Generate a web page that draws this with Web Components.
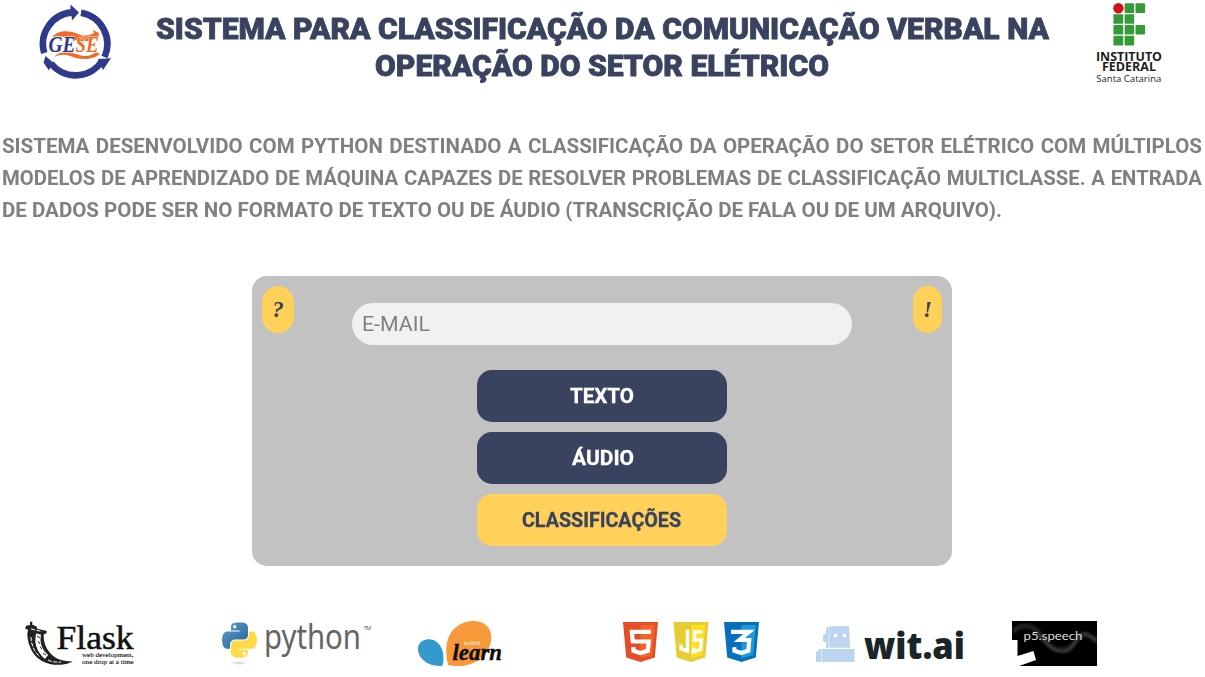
<!DOCTYPE html>
<html lang="pt-BR">
<head>
<meta charset="utf-8">
<title>Classificação da Comunicação Verbal</title>
<style>
body{margin:0;background:#fff;font-family:Roboto,"Liberation Sans",sans-serif;color:#39425f;overflow:hidden}
</style>
</head>
<body>
<app-page></app-page>
<script>
const define=(name,html,ready)=>customElements.define(name,class extends HTMLElement{
  constructor(){super();this.attachShadow({mode:'open'}).innerHTML=html;}
  connectedCallback(){if(ready)ready(this);}
});

// One line of text stretched to a given width; "ratio" fixes the glyph scale and leaves the rest to the word gaps
define('fit-line',`<style>:host{display:block;white-space:nowrap;width:var(--w)}span{display:inline-block;transform-origin:0 50%}</style><span><slot></slot></span>`,el=>{
  const w=+el.getAttribute('width');el.style.setProperty('--w',w+'px');
  const s=el.shadowRoot.querySelector('span');
  const words=el.textContent.trim().split(' ').length-1;
  const ratio=el.getAttribute('ratio');
  if(ratio){s.style.wordSpacing=((w/+ratio-s.getBoundingClientRect().width)/words)+'px';}
  const n=s.getBoundingClientRect().width;
  s.style.transform='scaleX('+(w/n)+')';
});

define('gese-logo',`<style>:host{display:block;width:72px;height:76px}svg{display:block}</style>
<svg width="72" height="76" viewBox="39 4 72 76">
<g fill="none" stroke="#303a8c" stroke-width="6.6"><path d="M44.3 53A31.6 31.6 0 0 1 72 12.4"/><path d="M81 12.8A31.6 31.6 0 0 1 104.500 57"/><path d="M102.500 60.500A31.6 31.6 0 0 1 51 63.500"/></g>
<g fill="#303a8c"><path d="M70.500 4.500 79 12.500 72 20.500l-.5-5-1-6z"/><path d="M98 59l13-.7-8 11.700-2.500-5z"/><path d="M45.500 56l10.500 9-5 .5-2 5-5.500-8z"/></g>
<g fill="#f26a25"><path d="M52 37C60 29 70 31 78 34c8 3 13 1 16-1l-1-3 6 3-1 7-2-2c-6 4-13 4-21 2-9-3-15-5-23-3z"/><path d="M54 57c7-7 15-5 22-3 8 3 14 3 20-2l4 2c-6 5-15 6-24 4-8-3-14-5-22-1z"/></g>
<g font-family="Liberation Serif,serif" font-style="italic" font-weight="bold" font-size="22.500"><text x="48.500" y="51.800" textLength="27" lengthAdjust="spacingAndGlyphs" fill="#303a8c" stroke="#fff" stroke-width="1" paint-order="stroke">GE</text><text x="75.500" y="51.800" textLength="23" lengthAdjust="spacingAndGlyphs" fill="#f26a25" stroke="#fff" stroke-width="1" paint-order="stroke">SE</text></g>
</svg>`);

define('ifsc-logo',`<style>:host{display:block;width:70px;height:86px}svg{display:block}</style>
<svg width="70" height="86" viewBox="1094 1 70 86">
<circle cx="1118.4" cy="8.2" r="5.2" fill="#cd1316"/>
<g fill="#359b38"><rect x="1124.6" y="3.3" width="9.6" height="9.6" rx="1"/><rect x="1135.5" y="3.3" width="9.6" height="9.6" rx="1"/><rect x="1113.4" y="14.2" width="9.8" height="9.6" rx="1"/><rect x="1124.6" y="14.2" width="9.6" height="9.6" rx="1"/><rect x="1113.4" y="25" width="9.8" height="9.6" rx="1"/><rect x="1124.6" y="25" width="9.6" height="9.6" rx="1"/><rect x="1135.5" y="25" width="9.6" height="9.6" rx="1"/><rect x="1113.4" y="35.8" width="9.8" height="9.6" rx="1"/><rect x="1124.6" y="35.8" width="9.6" height="9.6" rx="1"/></g>
<g font-family="Open Sans,sans-serif" fill="#1d1d1b"><g font-weight="bold" font-size="12.300"><text x="1096" y="60.500" textLength="66" lengthAdjust="spacingAndGlyphs">INSTITUTO</text><text x="1102" y="71.300" textLength="54" lengthAdjust="spacingAndGlyphs">FEDERAL</text></g><text x="1096.3" y="82" font-size="9.500" textLength="65" lengthAdjust="spacingAndGlyphs">Santa Catarina</text></g>
</svg>`);

define('page-header',`<style>
:host{display:flex;height:118px;padding:0 41px 0 39px;justify-content:space-between;box-sizing:border-box}
gese-logo{margin-top:4px}ifsc-logo{margin-top:1px}
h1{margin:10px 0 0 -1px;font-size:30px;font-weight:900;line-height:37px;display:flex;flex-direction:column;align-items:center;-webkit-text-stroke:.8px #39425f}
</style><gese-logo></gese-logo>
<h1><fit-line width="893">SISTEMA PARA CLASSIFICAÇÃO DA COMUNICAÇÃO VERBAL NA</fit-line><fit-line width="454">OPERAÇÃO DO SETOR ELÉTRICO</fit-line></h1>
<ifsc-logo></ifsc-logo>`);

define('page-intro',`<style>:host{display:block;height:146px;padding:12px 2px 0;color:#808080;font-weight:700;font-size:20px;line-height:32px}</style>
<fit-line width="1200" ratio="1.025">SISTEMA DESENVOLVIDO COM PYTHON DESTINADO A CLASSIFICAÇÃO DA OPERAÇÃO DO SETOR ELÉTRICO COM MÚLTIPLOS</fit-line>
<fit-line width="1200" ratio="1.015">MODELOS DE APRENDIZADO DE MÁQUINA CAPAZES DE RESOLVER PROBLEMAS DE CLASSIFICAÇÃO MULTICLASSE. A ENTRADA</fit-line>
<fit-line width="1000">DE DADOS PODE SER NO FORMATO DE TEXTO OU DE ÁUDIO (TRANSCRIÇÃO DE FALA OU DE UM ARQUIVO).</fit-line>`);

define('hint-badge',`<style>:host{display:block}button{display:block;width:100%;height:47px;border:0;border-radius:16px;background:#ffd159;color:#39425f;font:italic bold 23px "Liberation Serif",serif;padding:0}</style><button><slot></slot></button>`);

define('action-button',`<style>:host{display:block;width:250px}button{display:flex;align-items:center;justify-content:center;width:100%;height:52px;border:0;border-radius:15px;background:var(--bg,#39425f);color:var(--fg,#fff);font:bold 20px Roboto,sans-serif;padding:0 1px 0 0;-webkit-text-stroke:.3px}</style><button><slot></slot></button>`);

define('email-field',`<style>:host{display:flex;box-sizing:border-box;width:500px;height:42px;border-radius:21px;background:#f1f1f1;padding-left:10px;align-items:center;color:#808080;font-size:20px}</style><fit-line width="68">E-MAIL</fit-line>`);

define('entry-card',`<style>
:host{display:flex;box-sizing:border-box;width:700px;height:290px;margin:0 0 0 252px;padding:10px;background:#c2c2c2;border-radius:15px;justify-content:space-between}
.l{width:32px}.r{width:29px}
form{display:flex;flex-direction:column;align-items:center;gap:10px;padding-top:17px;margin-left:-3px}
email-field{margin-bottom:15px}
.y{--bg:#ffd159;--fg:#39425f}
</style><hint-badge class="l">?</hint-badge>
<form><email-field></email-field><action-button><fit-line width="64">TEXTO</fit-line></action-button><action-button><fit-line width="62">ÁUDIO</fit-line></action-button><action-button class="y"><fit-line width="159">CLASSIFICAÇÕES</fit-line></action-button></form>
<hint-badge class="r">!</hint-badge>`);

define('flask-logo',`<style>:host{display:block}svg{display:block}</style><svg width="120" height="56" viewBox="24 616 120 56">
<path d="M30 625v-3.300h2.300v3l4 1.500 1 2.500 9.500 2.200-.5 2.500-2.500.8c-.5 5 1 12 5 17 5 7 12 10 24 10.200-5 2.800-15 4.600-23 2.500-13-3-20-13-22-25-.8-4-.4-7 .3-9l-3-1.500 1-2.600z" fill="#222"/>
<path d="M31 629l11 2.500M31 637c0 8 4 16 9 20M48 660c4 2 8 2.500 13 2" stroke="#fff" stroke-width="1" fill="none" stroke-dasharray="4 1.500"/>
<path d="M38.500 634c-2 9 1 17 8 23" stroke="#fff" stroke-width="5" fill="none"/><path d="M37 636l3 2M38 641l2 3M40 647l2 2M43 653l3 2" stroke="#222" fill="none"/>
<g font-family="Liberation Serif,serif" fill="#111"><text x="56.500" y="648.500" font-size="34" stroke="#111" stroke-width=".5" textLength="77" lengthAdjust="spacingAndGlyphs">Flask</text><g font-size="6" stroke="#111" stroke-width=".1"><text x="82" y="656.800" textLength="51.500" lengthAdjust="spacingAndGlyphs">web development,</text><text x="82" y="663.500" textLength="51.500" lengthAdjust="spacingAndGlyphs">one drop at a time</text></g></g></svg>`);

define('python-logo',`<style>:host{display:block}svg{display:block}</style><svg width="160" height="61" viewBox="221 616 160 61">
<defs><linearGradient id="b" x2="1" y2="1"><stop stop-color="#5a9fd4"/><stop offset="1" stop-color="#28618f"/></linearGradient><linearGradient id="y" x2="1" y2="1"><stop stop-color="#ffd43b"/><stop offset="1" stop-color="#ffdf55"/></linearGradient><radialGradient id="s"><stop stop-color="#ccc"/><stop offset="1" stop-color="#fff"/></radialGradient></defs>
<ellipse cx="239" cy="663" rx="9" ry="2" fill="url(#s)"/>
<path transform="translate(222 622.500) scale(.315)" fill="url(#b)" d="M54.900 0C50.300 0 46 .4 42.100 1.100 30.800 3.100 28.700 7.300 28.700 15v10.200h26.800v3.400H18.700C10.900 28.600 4.100 33.200 2 42.200-.5 52.400-.6 58.800 2 69.500c1.900 7.900 6.500 13.600 14.200 13.600h9.200V70.800c0-8.800 7.700-16.700 16.800-16.700H69c7.400 0 13.400-6.100 13.400-13.600V15c0-7.300-6.100-12.700-13.400-13.900C64.300.3 59.500 0 54.900 0zM40.400 8.200c2.800 0 5 2.300 5 5.100s-2.200 5.100-5 5.100-5-2.300-5-5.100 2.200-5.100 5-5.100z"/>
<path transform="translate(222 622.500) scale(.315)" fill="url(#y)" d="M85.600 28.700v11.800c0 9.200-7.800 17-16.700 17H42.200c-7.300 0-13.400 6.300-13.400 13.600v25.500c0 7.300 6.300 11.500 13.400 13.600 8.500 2.500 16.600 2.900 26.700 0 6.700-2 13.400-5.900 13.400-13.600V86.400H55.600V83h40.100c7.800 0 10.700-5.400 13.400-13.600 2.800-8.400 2.700-16.500 0-27.200-1.900-7.700-5.600-13.600-13.400-13.600H85.600zM70.600 93.300c2.800 0 5 2.300 5 5.100s-2.200 5.100-5 5.100-5-2.300-5-5.100 2.200-5.100 5-5.100z"/>
<text x="264" y="648.500" font-family="Noto Sans,sans-serif" font-size="34" fill="#646464" textLength="97" lengthAdjust="spacingAndGlyphs">python</text><text x="363.500" y="629.500" font-family="Roboto" font-size="5.500" fill="#646464" textLength="7.500">TM</text></svg>`);

define('scikit-logo',`<style>:host{display:block}svg{display:block}</style><svg width="96" height="56" viewBox="417 616 96 56">
<path d="M448 665C444.500 650 446 636 455 628c10-9 26-9.500 33-1 6.500 9 3 23-7 31-9 8-22 9.500-33 7z" fill="#f89939"/><path d="M442.500 665.800c2.500-10 .5-20-7.500-25-8-4-17 0-17 8 0 11 12 18.500 24.500 17z" fill="#3499cd"/>
<text x="464" y="644.500" font-family="Lato,sans-serif" font-size="6.500" fill="#fff" textLength="16">scikit</text>
<text x="452.500" y="660" font-family="Liberation Serif,serif" font-style="italic" font-weight="bold" font-size="24" fill="#0b0b0b" stroke="#0b0b0b" stroke-width=".4" textLength="49.500" lengthAdjust="spacingAndGlyphs">learn</text></svg>`);

define('web-logos',`<style>:host{display:block}svg{display:block}</style><svg width="140" height="56" viewBox="622 616 140 56">
<path d="M623 622h35l-3.200 35.500-14.300 4.500-14.300-4.500z" fill="#e44d26"/><path d="M640.500 625h14.300l-2.700 30-11.600 3.600z" fill="#f16529"/>
<path d="M650.800 631.800h-19l1 9.700h16l-1 9.300-7.300 2.200-7-2.200-.3-3.800" fill="none" stroke="#fff" stroke-width="4.200"/>
<path d="M673.500 622h35l-3.200 35.500L691 662l-14.300-4.500z" fill="#e6cc35"/><path d="M691 625h14.300l-2.700 30-11.600 3.600z" fill="#ffdf20"/>
<path d="M687.500 629.500v21.500l-6.500-2.300v-4M702.500 632h-8v8h7l-.8 9.300-7.200 2.500v-4" fill="none" stroke="#fff" stroke-width="3.500"/>
<path d="M724 622h35l-3.200 35.500-14.300 4.500-14.300-4.500z" fill="#0870bb"/><path d="M741.500 625h14.300l-2.700 30-11.600 3.600z" fill="#1b9ad6"/>
<path d="M731 631.800h18.200l-9.800 8.200h9.800l-.9 10.800-6.800 2.200-7-2.200-.3-3.500" fill="none" stroke="#fff" stroke-width="4.200"/></svg>`);

define('wit-logo',`<style>:host{display:block}svg{display:block}</style><svg width="160" height="56" viewBox="815 616 160 56">
<g fill="#bbd4ef"><path d="M829 627l20-.8 1 21.500H829l-3-3v-15z"/><path d="M826 628l4-1.500 19-.5v2l-20 1-.5 19H826z"/><rect x="823" y="634" width="3.500" height="8" rx="1.500"/><path d="M819.500 649H854.500v13H816v-10z"/></g><path d="M821.500 650v12M829 629v19" stroke="#deebf8" fill="none"/><circle cx="835.500" cy="635.500" r="2" fill="#fff"/><circle cx="844.500" cy="635.500" r="2" fill="#fff"/>
<text x="864" y="658.800" font-family="Noto Sans,sans-serif" font-weight="900" font-size="36.500" fill="#1b2527" textLength="101" lengthAdjust="spacingAndGlyphs">wit.ai</text></svg>`);

define('speech-logo',`<style>:host{display:block}svg{display:block}</style><svg width="85" height="56" viewBox="1012 616 85 56">
<defs><filter id="f"><feGaussianBlur stdDeviation="1.200"/></filter><clipPath id="c"><path d="M1012 621h85v45h-85z"/></clipPath></defs><path d="M1012 621h85v45h-85z"/>
<g clip-path="url(#c)"><g filter="url(#f)" fill="none" stroke="#888"><path d="M1013 632c8-9 20-8 28 4 10 16 27 19 36 4 4-7 12-7 20 2" stroke-width="5" opacity=".25"/><path d="M1038 634c10 8 12 18 25 18 14 0 10-20 22-19l12 7" stroke-width="2" opacity=".35"/></g>
<path d="M1012 640h5.500v16l16-5 2.500 9-17 6h-7z" fill="#fff"/></g>
<text x="1023.500" y="639.500" font-family="Lato,sans-serif" font-size="12" fill="#ddd" textLength="59" lengthAdjust="spacingAndGlyphs">p5.speech</text></svg>`);

define('tech-strip',`<style>:host{display:grid;grid-template-columns:197px 196px 205px 193px 197px 85px;margin:50px 0 0 24px;width:1073px}</style><flask-logo></flask-logo><python-logo></python-logo><scikit-logo></scikit-logo><web-logos></web-logos><wit-logo></wit-logo><speech-logo></speech-logo>`);

define('app-page',`<style>:host{display:block;width:1205px;height:677px}</style><page-header></page-header><page-intro></page-intro><entry-card></entry-card><tech-strip></tech-strip>`);
</script>
</body>
</html>
